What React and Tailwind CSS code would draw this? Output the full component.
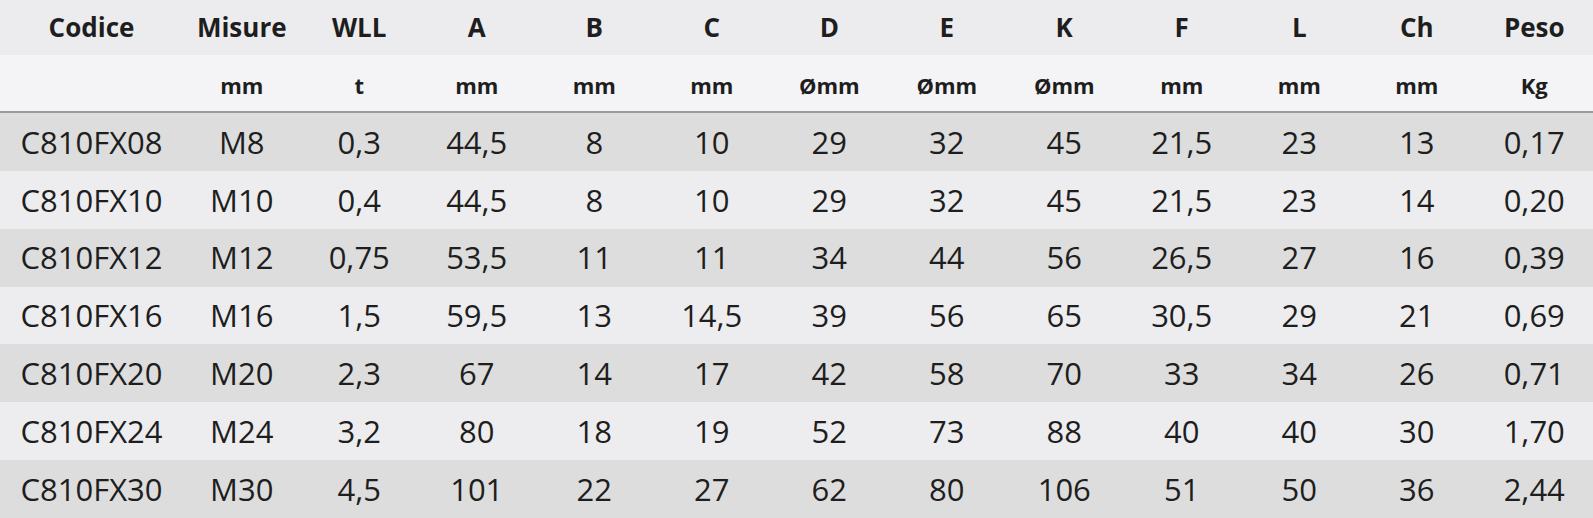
import React from "react";

const cols = ["Codice", "Misure", "WLL", "A", "B", "C", "D", "E", "K", "F", "L", "Ch", "Peso"];
const units = ["", "mm", "t", "mm", "mm", "mm", "Ømm", "Ømm", "Ømm", "mm", "mm", "mm", "Kg"];

const rows = [
  ["C810FX08", "M8", "0,3", "44,5", "8", "10", "29", "32", "45", "21,5", "23", "13", "0,17"],
  ["C810FX10", "M10", "0,4", "44,5", "8", "10", "29", "32", "45", "21,5", "23", "14", "0,20"],
  ["C810FX12", "M12", "0,75", "53,5", "11", "11", "34", "44", "56", "26,5", "27", "16", "0,39"],
  ["C810FX16", "M16", "1,5", "59,5", "13", "14,5", "39", "56", "65", "30,5", "29", "21", "0,69"],
  ["C810FX20", "M20", "2,3", "67", "14", "17", "42", "58", "70", "33", "34", "26", "0,71"],
  ["C810FX24", "M24", "3,2", "80", "18", "19", "52", "73", "88", "40", "40", "30", "1,70"],
  ["C810FX30", "M30", "4,5", "101", "22", "27", "62", "80", "106", "51", "50", "36", "2,44"],
];

const grid = "grid grid-cols-[183px_repeat(12,minmax(0,1fr))]";

export default function App() {
  return (
    <div className="w-[1593px] h-[518px] overflow-hidden bg-[#ededef] text-[#1e1e1e] font-['Open_Sans',sans-serif]">
      <div className={`${grid} h-[55px] bg-[#ececee] text-[26px] font-bold`}>
        {cols.map((c) => (
          <div key={c} className="flex items-center justify-center">
            {c}
          </div>
        ))}
      </div>
      <div className={`${grid} h-[58px] bg-[#f4f4f6] text-[22px] font-bold border-b-2 border-[#999a9c]`}>
        {units.map((u, i) => (
          <div key={i} className="flex items-center justify-center pt-1">
            {u}
          </div>
        ))}
      </div>
      {rows.map((r, i) => (
        <div
          key={r[0]}
          className={`${grid} h-[57.86px] text-[31px] ${i % 2 === 0 ? "bg-[#dddddd]" : "bg-[#ededef]"}`}
        >
          {r.map((v, j) => (
            <div key={j} className="flex items-center justify-center">
              {v}
            </div>
          ))}
        </div>
      ))}
    </div>
  );
}
